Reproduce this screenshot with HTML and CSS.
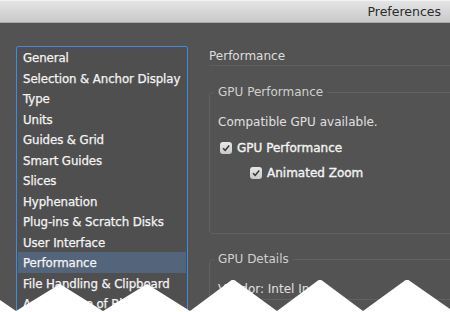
FILE: index.html
```html
<!DOCTYPE html>
<html lang="en">
<head>
    <meta charset="UTF-8">
    <title>Preferences</title>
    <link rel="stylesheet" href="styles.css">
</head>
<body>

    <div class="window">
        <div class="titlebar">Preferences</div>

        <div class="content">
            <ul class="sidebar">
                <li>General</li>
                <li>Selection &amp; Anchor Display</li>
                <li>Type</li>
                <li>Units</li>
                <li>Guides &amp; Grid</li>
                <li>Smart Guides</li>
                <li>Slices</li>
                <li>Hyphenation</li>
                <li>Plug-ins &amp; Scratch Disks</li>
                <li>User Interface</li>
                <li class="active">Performance</li>
                <li>File Handling &amp; Clipboard</li>
                <li>Appearance of Black</li>
            </ul>

            <div class="panel">
                <h1>Performance</h1>

                <fieldset class="group gpu">
                    <legend>GPU Performance</legend>
                    <div class="group-body">
                        <p class="note">Compatible GPU available.</p>
                        <label class="check">
                            <span class="box"><svg viewBox="0 0 12 12"><path d="M3 6.2 L5.2 8.4 L9.2 3.6"/></svg></span>
                            GPU Performance
                        </label>
                        <label class="check sub">
                            <span class="box"><svg viewBox="0 0 12 12"><path d="M3 6.2 L5.2 8.4 L9.2 3.6"/></svg></span>
                            Animated Zoom
                        </label>
                    </div>
                </fieldset>

                <fieldset class="group">
                    <legend>GPU Details</legend>
                    <div class="group-body">
                        <p class="note">Vendor: Intel Inc.</p>
                    </div>
                </fieldset>
            </div>
        </div>

        <!-- torn paper edge -->
        <svg class="tear" viewBox="0 0 450 32" preserveAspectRatio="none">
            <polygon points="0,20 16,31 60,4 103,31 147,4 190,31 233,-1 277,31 320,-1 363,31 407,-1 450,29 450,32 0,32"/>
        </svg>
    </div>

</body>
</html>
```

FILE: styles.css
```css
* {
    margin: 0;
    padding: 0;
    box-sizing: border-box;
}

body {
    background: #535353;
    font-family: "DejaVu Sans", sans-serif;
    font-size: 12px;
    color: #e6e6e6;
    width: 450px;
    height: 312px;
    overflow: hidden;
}

.window {
    position: relative;
    height: 312px;
    overflow: hidden;
}

.titlebar {
    height: 23px;
    background: linear-gradient(#e4e4e4, #c9c9c9);
    border-top: 1px solid #f2f2f2;
    border-bottom: 1px solid #a8a8a8;
    color: #2b2b2b;
    font-size: 12.5px;
    line-height: 21px;
    text-align: right;
    padding-right: 9px;
}

.content {
    display: flex;
    padding-top: 23px;
}

.sidebar {
    list-style: none;
    width: 172px;
    margin-left: 16px;
    border: 1px solid #3b8de2;
    border-radius: 2px;
    background: #4f4f4f;
    height: 300px;
    flex-shrink: 0;
}

.sidebar li {
    height: 20.5px;
    line-height: 20.5px;
    padding: 1px 0 0 5px;
    margin: 0 1px;
    color: #f4f4f4;
    font-size: 11.8px;
    letter-spacing: -0.1px;
    -webkit-text-stroke: 0.25px #f4f4f4;
    white-space: nowrap;
}

.sidebar li.active {
    background: #53657b;
}

.panel {
    flex: 1;
    margin-left: 21px;
    margin-right: -30px;
}

h1 {
    font-size: 12px;
    font-weight: normal;
    line-height: 18px;
    padding-top: 1px;
    color: #dedede;
    border-bottom: 1px solid #5f5f5f;
}

.group {
    border: 1px solid #616161;
    border-radius: 4px;
    padding: 0 0 0 4px;
    margin-top: 18px;
    min-width: 0;
}

.group.gpu {
    padding-bottom: 50px;
}

.group + .group {
    margin-top: 17px;
}

legend {
    padding: 0 4px;
    line-height: 16px;
    color: #d0d0d0;
}

.group-body {
    padding-left: 4px;
}

.note {
    margin-top: 12px;
    line-height: 20px;
    color: #e0e0e0;
}

.check {
    display: flex;
    align-items: center;
    height: 20px;
    margin-top: 6px;
    color: #f4f4f4;
    -webkit-text-stroke: 0.35px #f4f4f4;
}

.check.sub {
    margin-top: 5px;
    margin-left: 30px;
}

.box {
    width: 12px;
    height: 12px;
    margin: 0 5px 0 2px;
    border-radius: 3px;
    background: linear-gradient(#e8e8e8, #c9c9c9);
    display: flex;
    -webkit-text-stroke: 0;
}

.box svg {
    width: 12px;
    height: 12px;
}

.box path {
    fill: none;
    stroke: #3a3a3a;
    stroke-width: 1.6;
}

.tear {
    position: absolute;
    left: 0;
    bottom: 0;
    width: 450px;
    height: 32px;
}

.tear polygon {
    fill: #ffffff;
}
```
